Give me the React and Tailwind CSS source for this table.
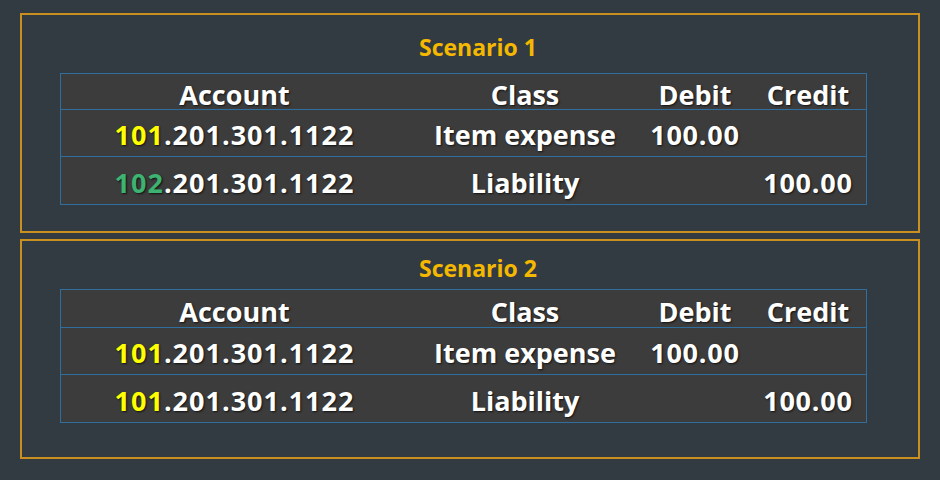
import React from 'react';

const scenarios = [
  {
    title: 'Scenario 1',
    pad: 'pt-[16px]',
    titleGap: 'mb-[10px]',
    head: 'h-[36px] pt-[5px]',
    rows: [
      { prefix: '101', color: 'text-[#ffff00]', rest: '.201.301.1122', cls: 'Item expense', debit: '100.00', credit: '' },
      { prefix: '102', color: 'text-[#3cb371]', rest: '.201.301.1122', cls: 'Liability', debit: '', credit: '100.00' },
    ],
  },
  {
    title: 'Scenario 2',
    pad: 'pt-[11px]',
    titleGap: 'mb-[5px]',
    head: 'h-[38px] pt-[6px]',
    rows: [
      { prefix: '101', color: 'text-[#ffff00]', rest: '.201.301.1122', cls: 'Item expense', debit: '100.00', credit: '' },
      { prefix: '101', color: 'text-[#ffff00]', rest: '.201.301.1122', cls: 'Liability', debit: '', credit: '100.00' },
    ],
  },
];

const cols = 'grid grid-cols-[347px_234px_106px_120px]';

const Scenario = ({ s }) => (
  <div className={`border-2 border-solid border-[#c98f1f] h-[220px] flex flex-col ${s.pad}`}>
    <h2 className={`pl-[16px] text-center text-[23px] leading-[32px] font-bold text-[#f5b800] ${s.titleGap}`}>{s.title}</h2>
    <div className="ml-[38px] w-[807px] border border-solid border-[#2f6fa0] divide-y divide-[#2f6fa0] bg-[#3c3c3c] text-white text-[27px] font-bold [text-shadow:1px_1px_2px_rgba(0,0,0,0.7)]">
      <div className={`${cols} ${s.head} items-center text-center leading-none`}>
        <div>Account</div>
        <div>Class</div>
        <div>Debit</div>
        <div>Credit</div>
      </div>
      {s.rows.map((r, i) => (
        <div key={i} className={`${cols} h-[47px] pt-[3px] items-center text-center leading-none`}>
          <div className="tracking-[1px]">
            <span className={r.color}>{r.prefix}</span>{r.rest}
          </div>
          <div>{r.cls}</div>
          <div className="tracking-[0.8px]">{r.debit}</div>
          <div className="tracking-[0.8px]">{r.credit}</div>
        </div>
      ))}
    </div>
  </div>
);

export default function App() {
  return (
    <div className="w-[940px] h-[480px] bg-[#323b41] px-5 pt-[13px] flex flex-col gap-[6px] font-['Open_Sans',sans-serif]">
      {scenarios.map((s) => (
        <Scenario key={s.title} s={s} />
      ))}
    </div>
  );
}
